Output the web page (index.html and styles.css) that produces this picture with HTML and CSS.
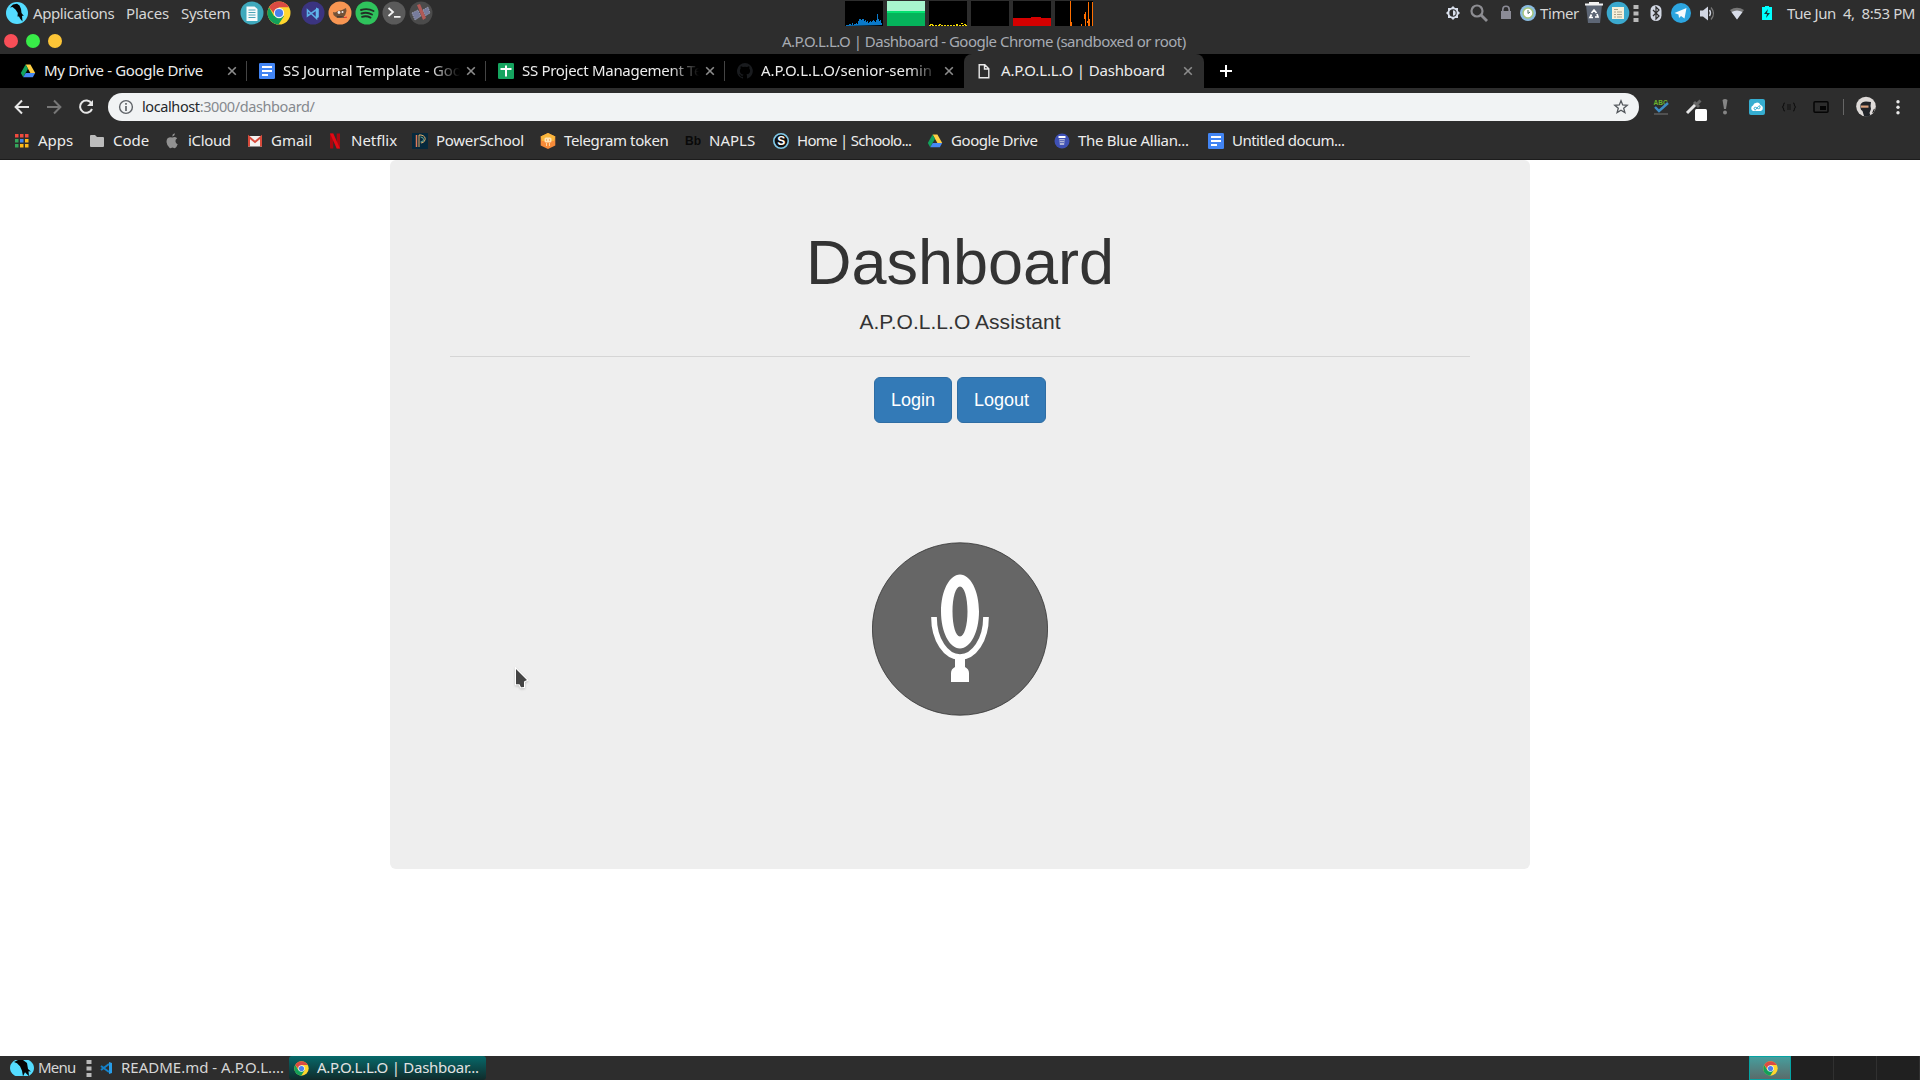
FILE: index.html
```html
<!DOCTYPE html>
<html lang="en">
<head>
<meta charset="utf-8">
<title>A.P.O.L.L.O | Dashboard</title>
<link rel="stylesheet" href="styles.css">
</head>
<body>
<svg class="defs" width="0" height="0" aria-hidden="true">
  <symbol id="chrome" viewBox="0 0 24 24">
    <circle cx="12" cy="12" r="11.5" fill="#ffd62e"/>
    <path d="M2.04 6.25A11.5 11.5 0 0 0 11.5 23.5L17 14.9H7Z" fill="#12a05a"/>
    <path d="M2.04 6.25A11.5 11.5 0 0 1 21.96 6.25H12L7.5 13Z" fill="#db4b43"/>
    <circle cx="12" cy="12" r="5.2" fill="#f4f4f4"/><circle cx="12" cy="12" r="4.1" fill="#4a80ee"/>
  </symbol>
  <symbol id="drive" viewBox="0 0 16 16">
    <path d="M5.6 1.5H10.4L15.2 10H10.4Z" fill="#ffcf44"/><path d="M5.6 1.5L8 5.8 3.2 14.3.8 10Z" fill="#11a25c"/><path d="M5.7 10H15.2L12.8 14.3H3.2Z" fill="#4688f4"/>
  </symbol>
  <symbol id="docs" viewBox="0 0 16 16">
    <rect width="16" height="16" rx="1.3" fill="#4285f4"/><path d="M3 4h10M3 8h10M3 12h6" stroke="#fff" stroke-width="2"/>
  </symbol>
  <symbol id="parrot" viewBox="0 0 24 24">
    <circle cx="12" cy="12" r="11" fill="#54dcff"/>
    <path d="M5 6.500L8 3.500 12 2.800 14.500 4.500 16 8 16.500 12 18.800 15 17 14.800 17.500 20.500 15 17.500 14 15.500 12.500 15.500 12.800 12 10.500 8.500 7.500 6Z" fill="#050505"/>
  </symbol>
  <symbol id="close" viewBox="0 0 10 10"><path d="M1.200 1.200l7.600 7.600M8.800 1.200L1.200 8.800" stroke="#8c8c8c" stroke-width="1.600"/></symbol>
  <symbol id="grip" viewBox="0 0 24 24"><path d="M9.500 4h5v4h-5zM9.500 10.500h5v4h-5zM9.500 17h5v4h-5z" fill="#b9b9b9"/></symbol>
</svg>

<header class="panel">
  <nav class="panel-left">
    <span class="logo"><svg width="24" height="24"><use href="#parrot"/></svg></span>
    <span class="t-app">Applications</span><span class="t-places">Places</span><span class="t-system">System</span>
    <svg width="24" height="24" viewBox="0 0 24 24"><circle cx="12" cy="12" r="11.500" fill="#3fa9bd"/><path d="M6.500 5.500h8l3 2.500v12h-11z" fill="#f7fbfc"/><path d="M8.500 9h7M8.500 11.500h7M8.500 14h7M8.500 16.500h7" stroke="#4aa4b8"/></svg>
    <svg width="24" height="24"><use href="#chrome"/></svg>
    <svg width="24" height="24" viewBox="0 0 24 24"><circle cx="12" cy="12" r="11.500" fill="#3b3480"/><path d="M6.500 9v6l9-6.500v9z" fill="none" stroke="#5cb0e8" stroke-width="1.600"/><path d="M15 6.500l2.800 1.300v8.400L15 17.500z" fill="#62b8ee"/></svg>
    <svg width="24" height="24" viewBox="0 0 24 24"><circle cx="12" cy="12" r="11.500" fill="#f79552"/><path d="M5 11l2 .5 3-1.500 4-1 4-2 .500 3-1.500 4.500-4 2H8.500L5.500 14z" fill="#735238"/><circle cx="11" cy="11.500" r="1.400" fill="#eee"/><circle cx="14.500" cy="11" r="1" fill="#eee"/><path d="M9 16h7" stroke="#333" stroke-width="1.200"/><path d="M16 16.500l3-.3" stroke="#d33"/></svg>
    <svg width="24" height="24" viewBox="0 0 24 24"><circle cx="12" cy="12" r="11.500" fill="#2fc35c"/><path d="M6 9q6.500-2.200 12.500 1M6.500 12.500q5.500-1.800 10.500 1M7 15.800q4.500-1.300 8.500.8" fill="none" stroke="#222f26" stroke-width="1.900" stroke-linecap="round"/></svg>
    <svg width="24" height="24" viewBox="0 0 24 24"><circle cx="12" cy="12" r="11.500" fill="#5a5a5a"/><path d="M6.500 7l4.500 4-4.500 4M12 15.800h6.500" fill="none" stroke="#f3f3f3" stroke-width="1.800"/></svg>
    <svg width="24" height="24" viewBox="0 0 24 24"><circle cx="12" cy="12" r="11.500" fill="#4b4b4b"/><path d="M3 12l6-3 3 6-6 4zM14 9l5-3 2 6-5 3z" fill="#777c9c" stroke="#a5a8bd" stroke-width=".8" stroke-dasharray="1.500 1"/><path d="M8 4l3-1 6 14-3 2z" fill="#b25a56"/></svg>
  </nav>
  <div class="graphs">
    <svg viewBox="0 0 38 25"><rect width="38" height="25"/><path d="M1 25v-1h3v-1h2v1h1v-2h1v2h1v-1h2v-1h1v1h1v-3h1v-2h2v1h1v-1h2v2h1v-1h1v2h1v-1h1v2h1v-1h1v-1h1v1h1v-1h1v-1h1v1h1v1h1v-2h1v-6h1v5h1v2h1v-1h1v3h1v2z" fill="#0a79c9"/></svg>
    <svg viewBox="0 0 38 25"><rect width="38" height="25" fill="#05b35b"/><rect width="38" height="10" fill="#a8f5ce"/><rect y="10" width="38" height="2" fill="#05e070"/></svg>
    <svg viewBox="0 0 38 25"><rect width="38" height="25"/><path d="M0 24.500h38" stroke="#f6d900" stroke-dasharray="2 1"/><path d="M1 23.500h3m6 0h2m15 0h2m3-1h2m1 1h2" stroke="#f6d900"/></svg>
    <svg viewBox="0 0 38 25"><rect width="38" height="25"/></svg>
    <svg viewBox="0 0 38 25"><rect width="38" height="25"/><path d="M0 25v-8h18v-1h10v1h10v8z" fill="#d60000"/></svg>
    <svg viewBox="0 0 38 25"><rect width="38" height="25"/><path d="M15 0h1v21h1v4h-2zM26 23h1v2h-1zM29 13h1v-2h1v14h-1v-7h-1zM32 20h1V1h1v17h1v7h-2v-3h-1zM37 1h1v24h-1z" fill="#ff6f00"/></svg>
  </div>
  <div class="tray">
    <svg width="24" height="24" viewBox="0 0 24 24"><path d="M12 5l2 2h3v3l2 2-2 2v3h-3l-2 2-2-2H7v-3l-2-2 2-2V7h3z" fill="#d8deea"/><circle cx="12" cy="12" r="3.700" fill="#2d2d2d"/><path d="M12 9.300a2.700 2.700 0 0 1 0 5.400z" fill="#d8deea"/></svg>
    <svg width="24" height="24" viewBox="0 0 24 24"><circle cx="10" cy="10" r="5.500" fill="none" stroke="#8d8d92" stroke-width="2.200"/><path d="M14 14l6 6" stroke="#8d8d92" stroke-width="2.800"/></svg>
    <svg width="24" height="24" viewBox="0 0 24 24"><path d="M8.800 11V8.500a3.200 3.200 0 0 1 6.400 0V11" fill="none" stroke="#8b8b96" stroke-width="1.600"/><rect x="7" y="10" width="10" height="8" fill="#8b8b96"/></svg>
    <svg width="24" height="24" viewBox="0 0 24 24"><circle cx="12" cy="12" r="8" fill="#8abbe0"/><circle cx="12" cy="12" r="5" fill="#fff" stroke="#a5c67b" stroke-width="1.500"/><path d="M12 9v3.500l2-1.500" fill="none" stroke="#4b7060"/></svg>
    <span class="t-timer">Timer</span>
    <svg width="24" height="24" viewBox="0 0 24 24"><path d="M4 4h16l-2 18H6z" fill="#5d6675"/><path d="M3 3.500h18M7 2h10" stroke="#f2f2f2" stroke-width="2"/><path d="M9.500 12l2.500-3 2.500 3M15 13l1 3h-3M11 16.500H8l1.500-3" fill="none" stroke="#fff" stroke-width="1.700"/></svg>
    <svg width="24" height="24" viewBox="0 0 24 24"><circle cx="12" cy="12" r="11.300" fill="#3ba9ce"/><path d="M6 6h12v12H6z" fill="#f7f0d9"/><path d="M8 8.500h4M8 11h2m1 0h5M8 13.500h2m1 0h5M8 16h2m1 0h5" stroke="#aaa38d"/></svg>
    <svg width="24" height="24"><use href="#grip"/></svg>
    <svg width="24" height="24" viewBox="0 0 24 24"><rect x="6.500" y="4" width="11" height="16" rx="5.500" fill="#d2d7e3"/><path d="M9 9l6 6-3 3V6l3 3-6 6" fill="none" stroke="#2d2d2d" stroke-width="1.200"/></svg>
    <svg width="24" height="24" viewBox="0 0 24 24"><circle cx="12" cy="12" r="10" fill="#2ca5e0"/><path d="M5.500 12L17.500 7l-2 10.500-3.500-2.500-2 2-.5-3.500z" fill="#f5fafd"/></svg>
    <svg width="24" height="24" viewBox="0 0 24 24"><path d="M5 9.500h3l5-4v14l-5-4H5z" fill="#d2d7e3"/><path d="M14.500 9q2 3 0 6" fill="none" stroke="#d2d7e3" stroke-width="1.400"/><path d="M16 6.500q5 6 0 12" fill="none" stroke="#777" stroke-width="1.300"/></svg>
    <svg width="24" height="24" viewBox="0 0 24 24"><path d="M5 9q7-4.500 14 0L12 18.500z" fill="#777"/><path d="M6.500 11q5.500-3 11 0L12 18.500z" fill="#d8dde9"/></svg>
    <svg width="24" height="24" viewBox="0 0 24 24"><path d="M7 6h3V5h4v1h3v13H7z" fill="#0ff"/><path d="M13 8l-4 5h3l-1 4 4-5h-3z" fill="#153b3d"/></svg>
    <span class="t-clock">Tue Jun&nbsp; 4, &nbsp;8:53 PM</span>
  </div>
</header>

<div class="titlebar">
  <div class="lights"><i class="red"></i><i class="green"></i><i class="yellow"></i></div>
  <span class="t-window">A.P.O.L.L.O | Dashboard - Google Chrome (sandboxed or root)</span>
</div>

<div class="tabs">
  <div class="tab"><svg width="16" height="16"><use href="#drive"/></svg><span class="label t-tab1">My Drive - Google Drive</span><svg class="x" width="10" height="10"><use href="#close"/></svg></div>
  <div class="tab"><svg width="16" height="16"><use href="#docs"/></svg><span class="label fade t-tab2">SS Journal Template - Goo</span><svg class="x" width="10" height="10"><use href="#close"/></svg></div>
  <div class="tab"><svg width="16" height="16" viewBox="0 0 16 16"><rect width="16" height="16" rx="1.300" fill="#15a45f"/><path d="M2.500 6h11M8 2.500v11" stroke="#fff" stroke-width="2"/></svg><span class="label fade t-tab3">SS Project Management Te</span><svg class="x" width="10" height="10"><use href="#close"/></svg></div>
  <div class="tab last"><svg width="16" height="16" viewBox="0 0 16 16"><path fill="#191b1e" d="M8 0a8 8 0 0 0-2.500 15.600c.4.100.5-.2.500-.4v-1.400c-2.200.500-2.700-1-2.700-1-.4-.9-.9-1.200-.9-1.200-.7-.5.1-.5.100-.5.800.100 1.200.800 1.200.800.700 1.200 1.900.900 2.300.700.100-.5.300-.9.500-1.100-1.800-.2-3.600-.9-3.600-4 0-.9.300-1.600.8-2.100-.1-.2-.4-1 .1-2.100 0 0 .7-.2 2.200.8a7.500 7.500 0 0 1 4 0c1.500-1 2.200-.8 2.200-.8.400 1.100.2 1.900.1 2.100.5.600.8 1.300.8 2.100 0 3.100-1.900 3.700-3.700 3.900.3.300.6.800.6 1.500v2.200c0 .200.100.500.600.400A8 8 0 0 0 8 0z"/></svg><span class="label fade t-tab4">A.P.O.L.L.O/senior-semin</span><svg class="x" width="10" height="10"><use href="#close"/></svg></div>
  <div class="tab active"><svg width="16" height="16" viewBox="0 0 16 16"><path d="M3.200 1.700h5.600l4 4v9H3.200zM8.500 2v4h4" fill="none" stroke="#e8e8e8" stroke-width="1.400"/></svg><span class="label t-tab5">A.P.O.L.L.O | Dashboard</span><svg class="x" width="10" height="10"><use href="#close"/></svg></div>
  <svg class="plus" width="14" height="14" viewBox="0 0 14 14"><path d="M7 1v12M1 7h12" stroke="#fff" stroke-width="2"/></svg>
</div>

<div class="toolbar">
  <div class="nav">
    <svg width="16" height="16" viewBox="0 0 16 16"><path d="M15 8H2M8 1.500L1.600 8 8 14.500" fill="none" stroke="#e6e6e6" stroke-width="2"/></svg>
    <svg width="16" height="16" viewBox="0 0 16 16"><path d="M1 8h13M8 1.500L14.400 8 8 14.500" fill="none" stroke="#777" stroke-width="2"/></svg>
    <svg width="16" height="16" viewBox="0 0 16 16"><path d="M13.500 4.300A6.200 6.200 0 1 0 14 10" fill="none" stroke="#e6e6e6" stroke-width="2"/><path d="M15 1v6H9z" fill="#e6e6e6"/></svg>
  </div>
  <div class="omnibox">
    <svg width="16" height="16" viewBox="0 0 16 16"><circle cx="8" cy="8" r="6.400" fill="none" stroke="#5f6368" stroke-width="1.400"/><path d="M8 7v5M8 4v1.700" stroke="#5f6368" stroke-width="1.700"/></svg>
    <span class="url t-url">localhost<em>:3000/dashboard/</em></span>
    <svg class="star" width="16" height="16" viewBox="0 0 16 16"><path d="M8 1.800l1.700 4.200 4.500.3-3.500 2.900 1.200 4.400L8 11.200l-3.900 2.400 1.200-4.400L1.800 6.300l4.500-.3z" fill="none" stroke="#54585d" stroke-width="1.300"/></svg>
  </div>
  <div class="ext">
    <svg width="24" height="24" viewBox="0 0 24 24"><text x="4.500" y="10" class="abc">ABC</text><path d="M6 12l4 4 9-8" fill="none" stroke="#3d8cc4" stroke-width="2.400"/><path d="M5 19h14" stroke="#777"/></svg>
    <svg width="24" height="28" viewBox="0 0 24 28"><path d="M2 20L11 11" stroke="#e6e6e6" stroke-width="3"/><path d="M9 9l5 5M11.500 11.500l4-4" stroke="#666" stroke-width="3"/><rect x="10" y="16" width="12" height="12" rx="1.500" fill="#fff"/></svg>
    <svg width="24" height="24" viewBox="0 0 24 24"><path d="M9.500 5q2.500-2 5 0L13 14h-2z" fill="#858585"/><circle cx="12" cy="17.500" r="2" fill="#858585"/></svg>
    <svg width="24" height="24" viewBox="0 0 24 24"><rect x="4" y="4" width="16" height="16" rx="2" fill="#35add0"/><path d="M8 16a3 3 0 0 1 0-5.500 4 4 0 0 1 7.500-.5A3.200 3.200 0 0 1 16 16z" fill="#fff"/><path d="M9 14q0-3 3-1t3-1-3 1-2 1" fill="none" stroke="#35add0"/></svg>
    <svg width="24" height="24" viewBox="0 0 24 24"><path d="M8 8q-1.500 0-1.500 2.500L5.500 12l1 1.500Q6.500 16 8 16M16 8q1.500 0 1.500 2.500l1 1.500-1 1.500Q17.500 16 16 16M10 10h4M10 12h4M10 14h4" fill="none" stroke="#111" stroke-width="1.100"/></svg>
    <svg width="24" height="24" viewBox="0 0 24 24"><rect x="5" y="6.700" width="14" height="10.600" rx="1" fill="none" stroke="#050505" stroke-width="1.500"/><rect x="11" y="11" width="6" height="4" fill="#050505"/></svg>
    <i class="sep"></i>
    <svg width="24" height="24" viewBox="0 0 24 24"><circle cx="12" cy="11.500" r="9.800" fill="#dedad8"/><path d="M6.500 9.500q1.500-3 5.500-3l5 .5-.5 4 .5 3-1.500 4 1 2.500q-4 1.500-6.500.5l-1.500-5q-2-1-2-3z" fill="#202328"/><path d="M7 10.500h7.500v2.200H7z" fill="#dba27e"/><path d="M18 18.500l1.500-4 1.500-1-1 3.500z" fill="#222"/></svg>
    <svg width="24" height="24" viewBox="0 0 24 24"><g fill="#e8e8e8"><circle cx="12" cy="6.800" r="1.700"/><circle cx="12" cy="12.300" r="1.700"/><circle cx="12" cy="17.800" r="1.700"/></g></svg>
  </div>
</div>

<nav class="bookmarks">
  <a><svg width="16" height="16" viewBox="0 0 16 16"><path d="M1 1h3.500v3.500H1zM6 1h3.500v3.500H6zM11 1h3.500v3.500H11z" fill="#f04b3e"/><path d="M1 6h3.500v3.500H1zM1 11h3.500v3.500H1z" fill="#34a65b"/><path d="M6 6h3.500v3.500H6z" fill="#3f86ee"/><path d="M11 6h3.500v3.500H11zM6 11h3.500v3.500H6zM11 11h3.500v3.500H11z" fill="#fbb918"/></svg><span>Apps</span></a>
  <a><svg width="16" height="16" viewBox="0 0 16 16"><path d="M1 3q0-1 1-1h4l2 2h6q1 0 1 1v8q0 1-1 1H2q-1 0-1-1z" fill="#bcbcbc"/></svg><span>Code</span></a>
  <a><svg width="16" height="16" viewBox="0 0 16 16"><path d="M8.500 4.500q2.500-1.200 4.700.8-2.200 1.200-1.700 3.500.3 1.700 2.200 2.500-1 3-2.800 3.900-.8 0-2.400-.7-1.800.8-2.600.7Q2.700 12.700 2.500 9 2.500 4.500 6 4.200z" fill="#929292"/><path d="M8.200 3.500q0-2.700 2.600-3.200.200 2.700-2.600 3.200" fill="#929292"/></svg><span class="b3">iCloud</span></a>
  <a><svg width="16" height="16" viewBox="0 0 16 16"><path d="M1 3h14v10.500H1z" fill="#f3f1ef"/><path d="M2 13.500V4l6 5 6-5v9.500" fill="none" stroke="#d84a3b" stroke-width="2"/></svg><span>Gmail</span></a>
  <a><svg width="16" height="16" viewBox="0 0 16 16"><path d="M3 .5h3.300v15H3zM9.700.5H13v15H9.700z" fill="#a90710"/><path d="M3 .5h3.300l6.700 15H9.700z" fill="#e50914"/></svg><span>Netflix</span></a>
  <a><svg width="16" height="16" viewBox="0 0 16 16"><rect width="16" height="16" fill="#06293d"/><path d="M4.500 14V2" stroke="#de7959" stroke-width="1.500"/><path d="M7 14V2h2q5 1 4 5-1 3-4 3" fill="none" stroke="#dfb06d"/><path d="M8.500 4q3 0 3 2.500T8.500 9" fill="none" stroke="#67a99b"/></svg><span class="b6">PowerSchool</span></a>
  <a><svg width="16" height="16" viewBox="0 0 16 16"><path d="M8 0l7.300 3.500v9L8 16 .7 12.500v-9z" fill="#f78b39"/><path d="M8 0l7.300 3.500L14 8H2L.7 3.500z" fill="#f9b63c"/><rect x="4.500" y="4.500" width="7" height="5" rx="1.500" fill="#ffe4b5"/><path d="M6 7h1m2 0h1" stroke="#e78135"/><path d="M6.500 10v3M9.500 10v3" stroke="#ffd59a"/></svg><span class="b7">Telegram token</span></a>
  <a><svg width="16" height="16" viewBox="0 0 16 16"><text x="0" y="12" class="bb">Bb</text></svg><span>NAPLS</span></a>
  <a><svg width="16" height="16" viewBox="0 0 16 16"><circle cx="8" cy="8" r="7.200" fill="#111" stroke="#80c9e8" stroke-width="1.600"/><text x="4.200" y="12.300" class="ess">S</text></svg><span class="b9">Home | Schoolo...</span></a>
  <a><svg width="16" height="16"><use href="#drive"/></svg><span class="b10">Google Drive</span></a>
  <a><svg width="16" height="16" viewBox="0 0 16 16"><circle cx="8" cy="8" r="7.500" fill="#3f51b5"/><path d="M4.500 3h7v2h-7z" fill="#fff"/><path d="M5.200 6h5.600l-.7 6H5.900z" fill="#aeb4d6"/><path d="M5.500 7.500h5M5.700 9.500h4.600" stroke="#6370b9"/></svg><span class="b11">The Blue Allian...</span></a>
  <a><svg width="16" height="16"><use href="#docs"/></svg><span class="b12">Untitled docum...</span></a>
</nav>

<main class="page">
  <section class="jumbotron">
    <h1>Dashboard</h1>
    <p>A.P.O.L.L.O Assistant</p>
    <hr>
    <div class="buttons"><button>Login</button><button>Logout</button></div>
    <svg class="mic" width="176" height="174" viewBox="0 0 176 174">
      <ellipse cx="88" cy="87" rx="87.600" ry="86.200" fill="#666" stroke="#333" stroke-width=".8"/>
      <path fill-rule="evenodd" fill="#fff" d="M88 32.500c10.500 0 19 16.500 19 37s-8.500 37-19 37-19-16.500-19-37 8.500-37 19-37zm0 12c-4.300 0-7.500 11-7.500 25s3.200 25 7.500 25 7.500-11 7.500-25-3.200-25-7.500-25z"/>
      <path d="M62 75c0 23 12 40 26 40s26-17 26-40" fill="none" stroke="#fff" stroke-width="5.700"/>
      <path d="M83 116h10v9q4 2 4 6v9H79v-9q0-4 4-6z" fill="#fff"/>
    </svg>
  </section>
  <svg class="cursor" width="16" height="24" viewBox="0 0 16 24"><path d="M2 2l11 11-3 1.500v5.500l-3 .3-1.500-3H2z" fill="#444" stroke="#fff" stroke-width="2" paint-order="stroke"/></svg>
</main>

<footer class="taskbar">
  <div class="menu"><svg width="24" height="22" viewBox="0 0 24 22"><clipPath id="mc"><rect y="3" width="24" height="16"/></clipPath><g clip-path="url(#mc)"><ellipse cx="12" cy="11" rx="12" ry="9.500" fill="#54dcff"/><path d="M4 5L8 3h5l4 3 1 6 3 2.500-2.500-.3.500 5-4-4-2 4-1-5.500-2-4.500-3-3z" fill="#050505"/></g></svg><span class="t-menu">Menu</span></div>
  <svg width="24" height="24"><use href="#grip"/></svg>
  <div class="task"><svg width="14" height="14" viewBox="0 0 14 14"><path d="M10 1l3 1v10l-3 1z" fill="#289de8"/><path d="M10 3L2 9M10 11L2 5" stroke="#1480c8" stroke-width="2"/></svg><span>README.md - A.P.O.L....</span></div>
  <div class="task current"><svg width="15" height="15"><use href="#chrome"/></svg><span class="t-task2">A.P.O.L.L.O | Dashboar...</span></div>
  <div class="desks"><b><svg width="15" height="15"><use href="#chrome"/></svg></b><i></i><i></i><i></i></div>
</footer>
</body>
</html>
```
FILE: styles.css
```css
* { box-sizing: border-box; }
body { margin: 0; width: 1920px; height: 1080px; overflow: hidden; display: flex; flex-direction: column; background: #fff; font: 15px/20px "Noto Sans", sans-serif; color: #d6d6d6; white-space: nowrap; }
svg { display: block; flex: none; }
.defs { position: absolute; }

.panel { height: 27px; flex: none; background: #2d2d2d; display: grid; grid-template-columns: 845px 596px 479px; }
.panel-left { display: grid; grid-template-columns: 33px 93px 55px 59px 27px 33.5px 27.5px 27px 27px 27px 27px; align-items: center; height: 25px; }
.logo { padding-left: 5px; }
.graphs { display: flex; gap: 4px; padding-top: 1px; }
.graphs svg { width: 38px; height: 25px; }
.tray { display: grid; grid-template-columns: 26px 27px 22px 24px 42px 24px 18px 20px 25px 26px 30px 30px 32px 133px; align-items: center; height: 25px; }
.panel span { padding-top: 1px; }
.panel .logo { padding-top: 0; }
.t-app { letter-spacing: -.42px; }
.t-places { letter-spacing: -.2px; }
.t-system { letter-spacing: -.3px; }
.t-timer { letter-spacing: -.4px; }
.t-clock { letter-spacing: -.42px; }

.titlebar { height: 27px; flex: none; background: #2d2d2d; display: grid; grid-template-columns: 782px 1fr; align-items: center; color: #a7abb3; }
.t-window { letter-spacing: -.51px; }
.lights { display: flex; gap: 8px; padding-left: 4px; }
.lights i { width: 14px; height: 14px; border-radius: 50%; }
.red { background: #f84e57; }
.green { background: #38ec48; }
.yellow { background: #fcc537; }

.tabs { height: 34px; flex: none; background: #000; padding-left: 8px; display: flex; color: #ececec; }
.tab { width: 239px; height: 34px; display: flex; align-items: center; padding: 0 10px 0 12px; position: relative; }
.tab::after { content: ""; position: absolute; right: 0; top: 7px; width: 1px; height: 20px; background: #444; }
.tab.last::after, .tab.active::after { display: none; }
.tab .label { margin-left: 8px; width: 177px; flex: none; padding-bottom: 2px; }
.tab .x { margin-left: 6px; }
.tab.active { width: 240px; background: #2d2d2d; border-radius: 8px 8px 0 0; }
.tab.active .label { margin-left: 9px; width: 176px; }
.fade { -webkit-mask-image: linear-gradient(90deg, #000 148px, transparent 177px); mask-image: linear-gradient(90deg, #000 148px, transparent 177px); }
.t-tab1 { letter-spacing: -.33px; }
.t-tab2 { letter-spacing: -.1px; }
.t-tab3 { letter-spacing: -.3px; }
.t-tab5 { letter-spacing: -.16px; }
.plus { margin: 10px 0 0 15px; }

.toolbar { height: 37px; flex: none; background: #2d2d2d; display: grid; grid-template-columns: 108px 1531px 1fr; align-items: center; }
.nav { display: flex; gap: 16px; padding-left: 14px; }
.omnibox { height: 28px; margin-top: 1px; border-radius: 14px; background: #f1f3f4; display: flex; align-items: center; padding: 0 10px; }
.url { margin-left: 8px; color: #25282b; flex: 1; font-size: 14.5px; letter-spacing: -.4px; padding-bottom: 2px; }
.url em { font-style: normal; color: #85898e; }
.ext { display: grid; grid-template-columns: 36px 28px 32px 32px 32px 34px 11px 32px 24px; padding-left: 10px; align-items: center; height: 37px; }
.ext .sep { width: 1px; height: 16px; background: #666; }
.abc { font: 900 6.500px "Liberation Sans", sans-serif; fill: #6bb52c; }
.bb { font: bold 12px "Liberation Sans", sans-serif; fill: #090909; }
.ess { font: bold 12px "Liberation Sans", sans-serif; fill: #fff; }

.bookmarks { height: 35px; flex: none; background: #2d2d2d; border-bottom: 1px solid #1c1c1c; padding: 0 0 2px 14px; display: grid; grid-template-columns: 75px 75px 83px 80px 85px 128px 145px 88px 154px 127px 154px 200px; align-items: center; color: #ececec; }
.bookmarks a { display: flex; gap: 8px; align-items: center; }
.bookmarks span { padding-bottom: 2px; }
.b3 { letter-spacing: -.35px; }
.b6 { letter-spacing: -.28px; }
.b7 { letter-spacing: -.38px; }
.b9 { letter-spacing: -.72px; }
.b10 { letter-spacing: -.42px; }
.b11 { letter-spacing: -.3px; }
.b12 { letter-spacing: -.52px; }

.page { flex: 1; background: #fff; position: relative; }
.jumbotron { width: 1140px; height: 709px; margin: 0 auto; padding: 48px 60px; background: #eee; border-radius: 6px; color: #333; font-family: "Liberation Sans", Arial, sans-serif; text-align: center; display: flow-root; }
h1 { margin: 20px 0 10px; font-size: 63px; line-height: 69.3px; font-weight: 400; }
.jumbotron p { margin: 0; font-size: 21px; line-height: 29.4px; letter-spacing: .04px; }
hr { margin: 19.300px 0 20px; height: 1px; border: 0; background: #d5d5d5; }
.buttons { display: flex; justify-content: center; gap: 5px; }
button { font: 18px/24px "Liberation Sans", Arial, sans-serif; color: #fff; background: #337ab7; border: 1px solid #2e6da4; border-radius: 6px; padding: 10px 16px; }
.mic { margin: 119px auto 0; }
.cursor { position: absolute; left: 514px; top: 507px; filter: drop-shadow(0 1px 1px #0003); }

.taskbar { height: 24px; flex: none; background: #2d2d2d; display: grid; grid-template-columns: 77px 22px 190px 197px 1fr; align-items: center; }
.taskbar span { padding-bottom: 2px; }
.menu { display: flex; padding-left: 10px; gap: 4px; align-items: center; }
.t-menu { letter-spacing: -.8px; }
.task { display: flex; gap: 8px; align-items: center; height: 24px; }
.current { background: linear-gradient(#07696a, #102a2a); border-radius: 3px; padding-left: 5px; color: #e2e2e2; }
.t-task2 { letter-spacing: -.26px; }
.desks { margin-left: 1263px; display: flex; width: 171px; height: 24px; background: #202020; }
.desks b { width: 42px; border: 1px solid #05a3a3; background: linear-gradient(#469e9d, #5b6b6a); display: grid; place-items: center; }
.desks i { width: 43px; border-right: 1px solid #303030; }
```
